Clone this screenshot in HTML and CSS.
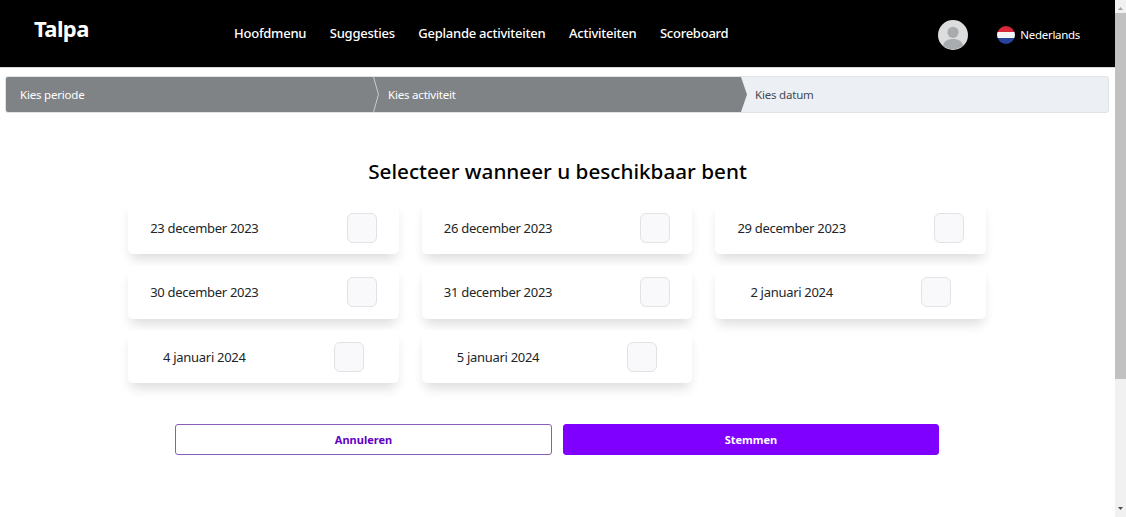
FILE: index.html
```html
<!DOCTYPE html>
<html lang="nl">
<head>
<meta charset="utf-8">
<title>Talpa</title>
<link rel="stylesheet" href="styles.css">
</head>
<body>
<div class="page">
  <header class="topbar">
    <div class="brand">Talpa</div>
    <nav class="nav">
      <a>Hoofdmenu</a>
      <a>Suggesties</a>
      <a>Geplande activiteiten</a>
      <a>Activiteiten</a>
      <a>Scoreboard</a>
    </nav>
    <div class="account">
      <svg class="avatar" viewBox="0 0 30 30" width="30" height="30">
        <circle cx="15" cy="15" r="15" fill="#dcdddf"/>
        <circle cx="15" cy="12.3" r="5.6" fill="#a9acae"/>
        <path d="M5 25.500c1-4.500 5-6.500 10-6.500s9 2 10 6.500a15 15 0 0 1-20 0z" fill="#a9acae"/>
      </svg>
      <div class="lang">
        <svg class="flag" viewBox="0 0 18 18" width="18" height="18">
          <defs><clipPath id="flagclip"><circle cx="9" cy="9" r="9"/></clipPath></defs>
          <g clip-path="url(#flagclip)">
            <rect width="18" height="6" fill="#d8283a"/>
            <rect y="6" width="18" height="6" fill="#f5f5f5"/>
            <rect y="12" width="18" height="6" fill="#27449a"/>
          </g>
        </svg>
        <span>Nederlands</span>
      </div>
    </div>
  </header>

  <ol class="steps">
    <li class="step step-one">Kies periode
      <svg class="sep" viewBox="0 0 7 35" width="7" height="35"><path d="M0.500 0L5.500 17.500L0.500 35" fill="none" stroke="#c9cbcc" stroke-width="1"/></svg>
    </li>
    <li class="step step-two">Kies activiteit
      <svg class="tip" viewBox="0 0 7 35" width="7" height="35"><path d="M0 0L6 17.500L0 35z" fill="#808385"/></svg>
    </li>
    <li class="step step-three">Kies datum</li>
  </ol>

  <main class="content">
    <h1 class="title">Selecteer wanneer u beschikbaar bent</h1>
    <div class="dates">
      <label class="date"><span>23 december 2023</span><i class="box"></i></label>
      <label class="date"><span>26 december 2023</span><i class="box"></i></label>
      <label class="date"><span>29 december 2023</span><i class="box"></i></label>
      <label class="date"><span>30 december 2023</span><i class="box"></i></label>
      <label class="date"><span>31 december 2023</span><i class="box"></i></label>
      <label class="date"><span>2 januari 2024</span><i class="box"></i></label>
      <label class="date"><span>4 januari 2024</span><i class="box"></i></label>
      <label class="date"><span>5 januari 2024</span><i class="box"></i></label>
    </div>
    <div class="actions">
      <button class="btn btn-outline">Annuleren</button>
      <button class="btn btn-solid">Stemmen</button>
    </div>
  </main>
</div>
<div class="scrollbar">
  <svg class="arrow" viewBox="0 0 11 17" width="11" height="17"><path d="M3 10L5.500 7L8 10z" fill="#a3a3a3"/></svg>
  <div class="thumb"></div>
  <div class="track"></div>
  <svg class="arrow" viewBox="0 0 11 17" width="11" height="17"><path d="M3 7L8 7L5.500 10z" fill="#505050"/></svg>
</div>
</body>
</html>
```
FILE: styles.css
```css
* { box-sizing: border-box; }
html, body { height: 100%; }
body {
  margin: 0;
  display: flex;
  height: 517px;
  overflow: hidden;
  background: #fff;
  color: #212529;
  font-family: "Noto Sans", "Open Sans", "Liberation Sans", sans-serif;
}
.page { flex: 1; min-width: 0; }

.topbar {
  height: 68px;
  background: #000;
  border-bottom: 1px solid #d8d8d8;
  display: flex;
  align-items: center;
  color: #fff;
  padding: 0 35px 5px 34px;
}
.brand { width: 200px; font-size: 22px; font-weight: 700; letter-spacing: -0.6px; margin-top: -6px; }
.nav { display: flex; gap: 23.500px; font-size: 13px; font-weight: 500; letter-spacing: -0.24px; margin-top: 3px; }
.account { margin-left: auto; display: flex; align-items: center; gap: 29px; margin-top: 7px; }
.avatar { display: block; }
.lang { display: flex; align-items: center; gap: 5px; font-size: 11.500px; letter-spacing: -0.3px; }
.flag { display: block; }

.steps {
  list-style: none;
  margin: 8px 6px 0 5px;
  padding: 0;
  height: 37px;
  display: flex;
  font-size: 11.500px;
  letter-spacing: -0.2px;
  background: #eceff3;
  border: 1px solid #dfe2e6;
  border-radius: 3px;
  overflow: hidden;
}
.step { display: flex; align-items: center; position: relative; color: #fff; background: #808385; }
.step-one { width: 368px; padding-left: 14px; }
.step-two { width: 367px; padding-left: 14px; }
.step-three { flex: 1; background: none; color: #444b52; padding-left: 14px; }
.sep { position: absolute; right: -6px; top: 0; z-index: 1; }
.tip { position: absolute; left: 100%; top: 0; z-index: 1; }

.content { display: flex; flex-direction: column; align-items: center; }
.title { margin: 43px 0 0; font-size: 20.700px; line-height: 30px; font-weight: 500; color: #000; }
.dates {
  margin: 15px 1px 0 0;
  display: grid;
  grid-template-columns: repeat(3, 270.670px);
  gap: 11.500px 23px;
}
.date {
  height: 53px;
  display: flex;
  align-items: center;
  justify-content: center;
  gap: 88px;
  background: #fff;
  border-radius: 5px;
  box-shadow: 0 8px 12px -3px rgba(0, 0, 0, 0.14);
  font-size: 13px;
  letter-spacing: -0.3px;
  color: #212529;
}
.box {
  width: 30px;
  height: 30px;
  background: #f9f9fc;
  border: 1px solid #e0e2e6;
  border-radius: 6px;
}
.actions { display: flex; gap: 11px; margin: 41px 1px 0 0; }
.btn {
  width: 377px;
  height: 31px;
  border-radius: 3px;
  font: 700 11px "Noto Sans", "Open Sans", "Liberation Sans", sans-serif;
  padding: 0;
}
.btn-outline { background: #fff; color: #6200c4; border: 1px solid #8a5cb8; }
.btn-solid { width: 376px; background: #7f00ff; color: #fff; border: 1px solid #7f00ff; }

.scrollbar { width: 11px; flex: none; background: #f1f1f1; display: flex; flex-direction: column; }
.arrow { display: block; flex: none; }
.thumb { height: 366px; flex: none; background: #c1c1c1; margin-top: -4px; }
.track { flex: 1; }
```
